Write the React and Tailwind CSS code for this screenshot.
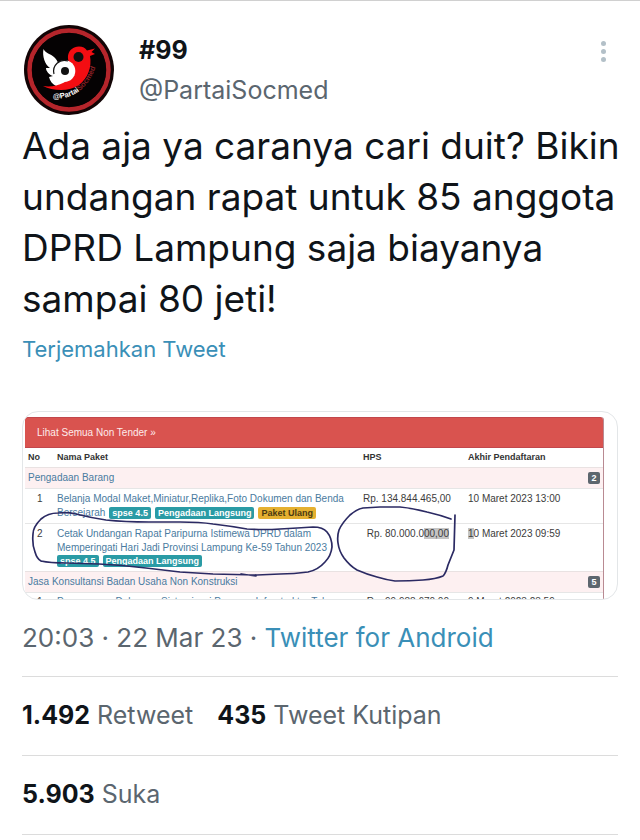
const CHIRP = "font-[Inter,'Liberation_Sans',sans-serif]";

function Avatar() {
  return (
    <svg viewBox="0 0 90 90" className="h-[90px] w-[90px] shrink-0" role="img" aria-label="PartaiSocmed">
      <circle cx="45" cy="45" r="45" fill="#120405" />
      <circle cx="45" cy="45" r="39.5" fill="none" stroke="#b5252b" strokeWidth="4.5" />
      <circle cx="45" cy="45" r="37" fill="#050203" />
      <path
        d="M19.500 24 C21 28 27 29 30 32 C32 34 34 36 34 39 L40 35 C47 35 51 40 51 46 L50 56 C44 62 38 63 32 61 C28 59 26 56 25 52 L29 51 C25 50 22 46 22 43 L26 43 C21 40 18 31 19.500 24Z"
        fill="#fff"
      />
      <path
        d="M55 21.500 C59 21.500 61 23 63 25.500 L71 23.500 L67.500 27 L71 29 L66 31 C68 42 64 53 55 60 C45 67 29 66 19 61 C32 63 45 57 50 48 C51 45 50 43 48 41 C41 35 43 22 55 21.500Z"
        fill="#f40d12"
      />
      <circle cx="40.500" cy="46" r="10.800" fill="#fff" />
      <path d="M30 49 A10.800 10.800 0 0 1 44 36" fill="none" stroke="#111" strokeWidth="1.200" />
      <circle cx="41" cy="46" r="4" fill="#111" />
      <circle cx="54.500" cy="32" r="5" fill="#111" />
      <path id="ring" d="M29 74 Q61 74 72 41" fill="none" />
      <text className="font-['Liberation_Sans',sans-serif] font-bold" fontSize="7.5" fill="#fff">
        <textPath href="#ring">
          @Partai<tspan fill="#8d2026">Socmed</tspan>
        </textPath>
      </text>
    </svg>
  );
}

function Badge({ tone = "teal", children }) {
  const colour = tone === "amber" ? "bg-[#e5b030] text-[#4b3a10]" : "bg-[#2a9ba5] text-white";
  return (
    <span className={`inline-block h-3 rounded-[2px] px-[3px] align-middle text-[9px] leading-3 font-bold ${colour}`}>
      {children}
    </span>
  );
}

function GroupRow({ title, count }) {
  return (
    <tr className="h-[21px] border-t border-[#e9e2e2] bg-[#fdf0f1]">
      <td colSpan={3} className="pl-[3px] align-middle">
        <a href="#" className="text-[#4a7ba0]">{title}</a>
      </td>
      <td className="pr-[3px] text-right align-middle">
        <span className="inline-block h-3 w-3 rounded-[2px] bg-[#5d666e] text-center align-middle text-[9px] leading-3 font-bold text-white">
          {count}
        </span>
      </td>
    </tr>
  );
}

function TenderTable() {
  return (
    <div className="mt-[5px] mr-[13px] ml-[2px] rounded-t-[3px] border-r border-[#b98a92] font-['Liberation_Sans',Arial,sans-serif] text-[10px] leading-[14px] text-[#3c3c3c]">
      <div className="flex h-[31px] items-center rounded-t-[3px] border-y border-[#c2474c] bg-[#d9534f] pl-3">
        <a href="#" className="text-[#fdeceb]">Lihat Semua Non Tender »</a>
      </div>
      <table className="w-full table-fixed border-collapse">
        <thead>
          <tr className="h-[19px] text-left align-middle text-[9px] text-[#333]">
            <th className="w-8 pl-[3px]">No</th>
            <th>Nama Paket</th>
            <th className="w-[105px]">HPS</th>
            <th className="w-[135px]">Akhir Pendaftaran</th>
          </tr>
        </thead>
        <tbody>
          <GroupRow title="Pengadaan Barang" count={2} />
          <tr className="h-[35px] border-t border-[#e6e6e6] align-top">
            <td className="pt-[3px] pl-3">1</td>
            <td className="pt-[3px] text-[#4a7ba0]">
              <a href="#">Belanja Modal Maket,Miniatur,Replika,Foto Dokumen dan Benda</a>
              <div className="flex items-center gap-1">
                <a href="#">Bersejarah</a>
                <Badge>spse 4.5</Badge>
                <Badge>Pengadaan Langsung</Badge>
                <Badge tone="amber">Paket Ulang</Badge>
              </div>
            </td>
            <td className="pt-[3px] pr-[19px] text-right whitespace-nowrap">Rp. 134.844.465,00</td>
            <td className="pt-[3px]">10 Maret 2023 13:00</td>
          </tr>
          <tr className="h-12 border-t border-[#e6e6e6] align-top">
            <td className="pt-[3px] pl-3">2</td>
            <td className="pt-[3px] text-[#4a7ba0]">
              <a href="#">
                Cetak Undangan Rapat Paripurna Istimewa DPRD dalam
                <br />
                Memperingati Hari Jadi Provinsi Lampung Ke-59 Tahun 2023
              </a>
              <div className="flex items-center gap-1">
                <Badge>spse 4.5</Badge>
                <Badge>Pengadaan Langsung</Badge>
              </div>
            </td>
            <td className="pt-[3px] pr-[19px] text-right whitespace-nowrap">
              Rp. 80.000.0<span className="bg-[#c4c4c4]">00,00</span>
            </td>
            <td className="pt-[3px]">
              <span className="bg-[#c4c4c4]">1</span>0 Maret 2023 09:59
            </td>
          </tr>
          <GroupRow title="Jasa Konsultansi Badan Usaha Non Konstruksi" count={5} />
          <tr className="border-t border-[#e6e6e6] align-top">
            <td className="pt-[2px] pl-3">1</td>
            <td className="pt-[2px] whitespace-nowrap text-[#4a7ba0]">
              <a href="#">Penyusunan Dokumen Sistemisasi Program Infrastruktur Tahunan</a>
            </td>
            <td className="pt-[2px] pr-[19px] text-right whitespace-nowrap">Rp. 99.988.670,00</td>
            <td className="pt-[2px]">9 Maret 2023 23:59</td>
          </tr>
        </tbody>
      </table>
    </div>
  );
}

function PenMarks() {
  return (
    <svg
      viewBox="23 412 594 187"
      preserveAspectRatio="none"
      className="pointer-events-none absolute inset-0 h-full w-full"
      fill="none"
      stroke="#2b2a63"
      strokeWidth="1.7"
      strokeLinecap="round"
      strokeLinejoin="round"
      aria-hidden="true"
    >
      <path d="M41 561 Q37 559 35 552 Q32 545 33 534 Q33 527 41 519 Q48 513 58 513 Q67 512 76 514 Q92 518 106 520 Q125 522 149 522 L180 522 Q200 522 213 524 Q230 526 247 529 Q264 530 280 529 Q298 528 313 527 Q323 527 327 532 Q332 538 332 547 Q331 556 325 562 Q318 570 308 572 Q294 574 280 574 L257 575 L213 574 Q196 573 180 572 L146 568 Q122 565 99 564 L66 563 Q50 563 41 561 M241 574 L256 576" />
      <path d="M451 519 Q440 515 427 512 Q412 508 400 507 L380 507 L363 508 Q357 509 350 515 Q342 523 339 530 Q337 536 338 543 Q339 551 344 558 Q350 566 357 570 Q366 574 377 577 Q387 580 395 581 Q410 581 423 580 Q436 579 443 576 Q446 573 448 565 L454 550 L455 515" />
    </svg>
  );
}

function Stat({ value, label }) {
  return (
    <a href="#" className="text-[#5b666f]">
      <strong className="font-bold text-[#0f1419]">{value}</strong> {label}
    </a>
  );
}

export default function App() {
  return (
    <article className={`min-h-screen border-t border-[#d0d0d0] bg-white px-[22px] text-[#0f1419] ${CHIRP}`}>
      <header className="flex items-center pt-6 pl-[2px]">
        <Avatar />
        <div className="ml-[25px] flex-1 text-[25px] leading-10">
          <h1 className="font-bold">#99</h1>
          <a href="#" className="block text-[#5b666f]">@PartaiSocmed</a>
        </div>
        <button type="button" aria-label="Opsi lainnya" className="mr-3 flex flex-col gap-[3px] self-start pt-4">
          <span className="h-[5px] w-[5px] rounded-full bg-[#b3c0c8]" />
          <span className="h-[5px] w-[5px] rounded-full bg-[#b3c0c8]" />
          <span className="h-[5px] w-[5px] rounded-full bg-[#b3c0c8]" />
        </button>
      </header>

      <p className="-mr-3 mt-[5px] text-[37px] leading-[51px]">
        Ada aja ya caranya cari duit? Bikin undangan rapat untuk 85 anggota DPRD Lampung saja biayanya sampai 80 jeti!
      </p>
      <a href="#" className="mt-[10px] block text-[22px] leading-[30px] text-[#3a8fb7]">Terjemahkan Tweet</a>

      <div className="relative mt-[47px] h-[189px] overflow-hidden rounded-[16px] border border-[#e3e6e8]">
        <TenderTable />
        <PenMarks />
      </div>

      <p className="mt-[18px] border-b border-[#dcdcdc] pb-[18px] text-[26px] leading-10 text-[#5b666f]">
        20:03 · 22 Mar 23 · <a href="#" className="text-[#3a8fb7]">Twitter for Android</a>
      </p>
      <div className="flex h-[79px] items-center gap-6 border-b border-[#dcdcdc] text-[25px]">
        <Stat value="1.492" label="Retweet" />
        <Stat value="435" label="Tweet Kutipan" />
      </div>
      <div className="flex h-[79px] items-center border-b border-[#dcdcdc] text-[25px]">
        <Stat value="5.903" label="Suka" />
      </div>
    </article>
  );
}
